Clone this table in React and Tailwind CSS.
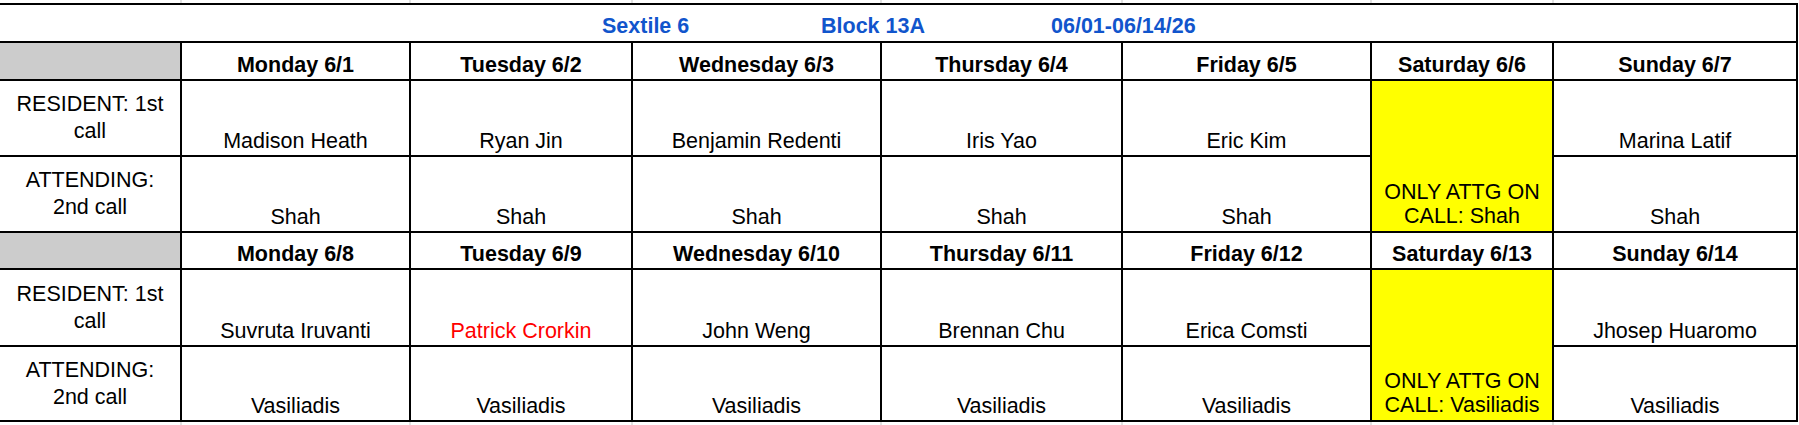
import React from "react";

const COLS = "grid-cols-[180px_227px_220px_247px_239px_247px_180px_242px]";

const week1 = {
  days: ["Monday 6/1", "Tuesday 6/2", "Wednesday 6/3", "Thursday 6/4", "Friday 6/5", "Saturday 6/6", "Sunday 6/7"],
  residents: ["Madison Heath", "Ryan Jin", "Benjamin Redenti", "Iris Yao", "Eric Kim", null, "Marina Latif"],
  attending: "Shah",
};
const week2 = {
  days: ["Monday 6/8", "Tuesday 6/9", "Wednesday 6/10", "Thursday 6/11", "Friday 6/12", "Saturday 6/13", "Sunday 6/14"],
  residents: ["Suvruta Iruvanti", "Patrick Crorkin", "John Weng", "Brennan Chu", "Erica Comsti", null, "Jhosep Huaromo"],
  attending: "Vasiliadis",
};

function Data({ children, className = "" }) {
  return (
    <div className={`flex items-end justify-center bg-white pb-[2.5px] text-center leading-[24px] whitespace-nowrap ${className}`}>
      {children}
    </div>
  );
}

function Label({ top, bottom }) {
  return (
    <div className="flex items-center justify-center bg-white text-center leading-[27px]">
      <div>
        {top}
        <br />
        {bottom}
      </div>
    </div>
  );
}

function Week({ w }) {
  const cells = [];
  cells.push(<div key="h-label" className="bg-[#cccccc]" />);
  w.days.forEach((d) => cells.push(<Data key={"h" + d} className="font-bold">{d}</Data>));
  cells.push(<Label key="r-label" top="RESIDENT: 1st" bottom="call" />);
  w.residents.forEach((r, i) => {
    if (r === null) {
      cells.push(
        <div key={"r" + i} className="row-span-2 flex items-end justify-center bg-[#ffff00] pb-[3.5px] text-center leading-[24px]">
          <div>
            ONLY ATTG ON
            <br />
            CALL: {w.attending}
          </div>
        </div>
      );
    } else {
      cells.push(
        <Data key={"r" + i} className={r === "Patrick Crorkin" ? "text-[#ff0000]" : ""}>
          {r}
        </Data>
      );
    }
  });
  cells.push(<Label key="a-label" top="ATTENDING:" bottom="2nd call" />);
  w.residents.forEach((r, i) => {
    if (r === null) return;
    cells.push(<Data key={"a" + i}>{w.attending}</Data>);
  });
  return cells;
}

function Strip() {
  return (
    <div className={`grid ${COLS} h-[3px] w-[1796px] gap-x-[2px] bg-[#e3e3e3]`}>
      {Array.from({ length: 8 }).map((_, i) => (
        <div key={i} className="bg-white" />
      ))}
    </div>
  );
}

export default function App() {
  return (
    <div className="h-[425px] w-[1799px] overflow-hidden bg-white text-[21.5px] text-black [font-family:'Liberation_Sans',Arial,sans-serif]">
      <Strip />
      <div
        className={`grid ${COLS} grid-rows-[36px_36px_74px_74px_35px_75px_73px] w-[1798px] gap-[2px] bg-black pt-[2px] pr-[2px] pb-[2px]`}
      >
        <div className="col-span-8 flex items-end bg-white pb-[3px] pl-[602px] font-bold leading-[24px] text-[#1155cc] whitespace-nowrap">
          <span className="w-[219px]">Sextile 6</span>
          <span className="w-[230px]">Block 13A</span>
          <span>06/01-06/14/26</span>
        </div>
        <Week w={week1} />
        <Week w={week2} />
      </div>
      <Strip />
    </div>
  );
}
